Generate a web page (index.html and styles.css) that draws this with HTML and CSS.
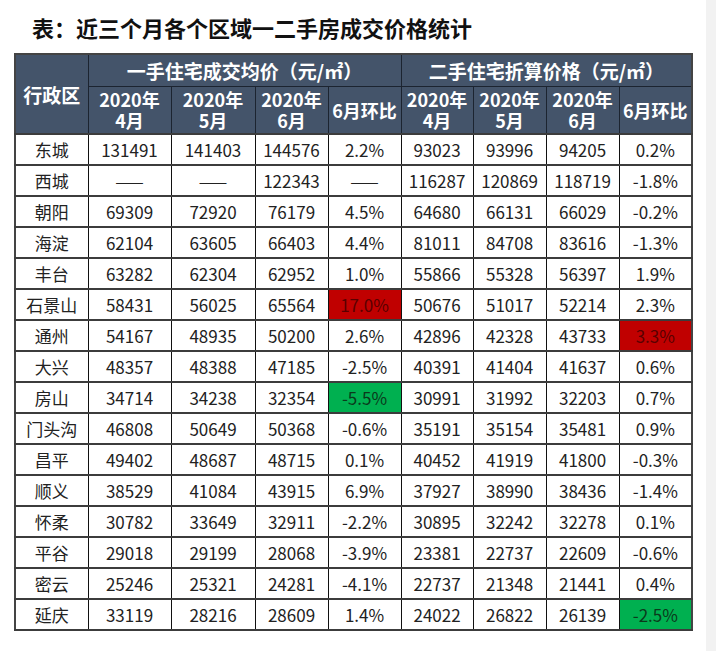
FILE: index.html
```html
<!DOCTYPE html>
<html lang="zh-CN">
<head>
<meta charset="utf-8">
<title>近三个月各个区域一二手房成交价格统计</title>
<link rel="stylesheet" href="styles.css">
</head>
<body>
<div class="page">
  <h1 class="title">表：近三个月各个区域一二手房成交价格统计</h1>
  <table class="stats">
    <colgroup>
      <col class="c-district">
      <col class="c-83"><col class="c-84"><col class="c-73"><col class="c-73">
      <col class="c-72"><col class="c-73"><col class="c-73"><col class="c-73">
    </colgroup>
    <thead>
      <tr class="h1">
        <th rowspan="2" class="district-h">行政区</th>
        <th colspan="4">一手住宅成交均价（元/㎡）</th>
        <th colspan="4">二手住宅折算价格（元/㎡）</th>
      </tr>
      <tr class="h2">
        <th>2020年<br>4月</th><th>2020年<br>5月</th><th>2020年<br>6月</th><th>6月环比</th>
        <th>2020年<br>4月</th><th>2020年<br>5月</th><th>2020年<br>6月</th><th>6月环比</th>
      </tr>
    </thead>
    <tbody>
      <tr><td>东城</td><td>131491</td><td>141403</td><td>144576</td><td>2.2%</td><td>93023</td><td>93996</td><td>94205</td><td>0.2%</td></tr>
      <tr><td>西城</td><td>——</td><td>——</td><td>122343</td><td>——</td><td>116287</td><td>120869</td><td>118719</td><td>-1.8%</td></tr>
      <tr><td>朝阳</td><td>69309</td><td>72920</td><td>76179</td><td>4.5%</td><td>64680</td><td>66131</td><td>66029</td><td>-0.2%</td></tr>
      <tr><td>海淀</td><td>62104</td><td>63605</td><td>66403</td><td>4.4%</td><td>81011</td><td>84708</td><td>83616</td><td>-1.3%</td></tr>
      <tr><td>丰台</td><td>63282</td><td>62304</td><td>62952</td><td>1.0%</td><td>55866</td><td>55328</td><td>56397</td><td>1.9%</td></tr>
      <tr><td>石景山</td><td>58431</td><td>56025</td><td>65564</td><td class="up">17.0%</td><td>50676</td><td>51017</td><td>52214</td><td>2.3%</td></tr>
      <tr><td>通州</td><td>54167</td><td>48935</td><td>50200</td><td>2.6%</td><td>42896</td><td>42328</td><td>43733</td><td class="up">3.3%</td></tr>
      <tr><td>大兴</td><td>48357</td><td>48388</td><td>47185</td><td>-2.5%</td><td>40391</td><td>41404</td><td>41637</td><td>0.6%</td></tr>
      <tr><td>房山</td><td>34714</td><td>34238</td><td>32354</td><td class="down">-5.5%</td><td>30991</td><td>31992</td><td>32203</td><td>0.7%</td></tr>
      <tr><td>门头沟</td><td>46808</td><td>50649</td><td>50368</td><td>-0.6%</td><td>35191</td><td>35154</td><td>35481</td><td>0.9%</td></tr>
      <tr><td>昌平</td><td>49402</td><td>48687</td><td>48715</td><td>0.1%</td><td>40452</td><td>41919</td><td>41800</td><td>-0.3%</td></tr>
      <tr><td>顺义</td><td>38529</td><td>41084</td><td>43915</td><td>6.9%</td><td>37927</td><td>38990</td><td>38436</td><td>-1.4%</td></tr>
      <tr><td>怀柔</td><td>30782</td><td>33649</td><td>32911</td><td>-2.2%</td><td>30895</td><td>32242</td><td>32278</td><td>0.1%</td></tr>
      <tr><td>平谷</td><td>29018</td><td>29199</td><td>28068</td><td>-3.9%</td><td>23381</td><td>22737</td><td>22609</td><td>-0.6%</td></tr>
      <tr><td>密云</td><td>25246</td><td>25321</td><td>24281</td><td>-4.1%</td><td>22737</td><td>21348</td><td>21441</td><td>0.4%</td></tr>
      <tr><td>延庆</td><td>33119</td><td>28216</td><td>28609</td><td>1.4%</td><td>24022</td><td>26822</td><td>26139</td><td class="down">-2.5%</td></tr>
    </tbody>
  </table>
</div>
</body>
</html>
```

FILE: styles.css
```css
html, body {
  margin: 0;
  padding: 0;
  background: #ffffff;
}

.page {
  width: 716px;
  height: 651px;
  box-sizing: border-box;
  padding: 12px 0 0 14px;
  border-right: 10px solid #f2f2f2;
  font-family: "Noto Sans CJK SC", "Noto Sans", sans-serif;
  color: #222;
}

.title {
  margin: 0 0 11px 18px;
  font-size: 22px;
  line-height: 30px;
  font-weight: 700;
  color: #111;
}

.stats {
  border-collapse: collapse;
  table-layout: fixed;
  width: 677px;
  border: 2px solid #444;
}

.c-district { width: 73px; }
.c-83 { width: 83px; }
.c-84 { width: 84px; }
.c-73 { width: 73px; }
.c-72 { width: 72px; }

.stats th {
  background: #44546a;
  color: #ffffff;
  font-weight: 700;
  font-size: 18px;
  line-height: 21px;
  padding: 0;
  text-align: center;
  border: 1px solid #1c2430;
}

.stats .h1 th {
  height: 31px;
  font-size: 19px;
}

.stats .h1 th.district-h {
  font-size: 19px;
}

.stats .h2 th {
  height: 46px;
}

.stats td {
  height: 29px;
  padding: 0;
  text-align: center;
  font-size: 17px;
  line-height: 20px;
  border-left: 1px solid #111;
  border-right: 1px solid #111;
  border-top: 2px solid #3c3c3c;
  border-bottom: 2px solid #3c3c3c;
}

.stats td.up {
  background: #c00000;
  color: #5a0000;
}

.stats td.down {
  background: #00b050;
  color: #0b3a1c;
}
```
